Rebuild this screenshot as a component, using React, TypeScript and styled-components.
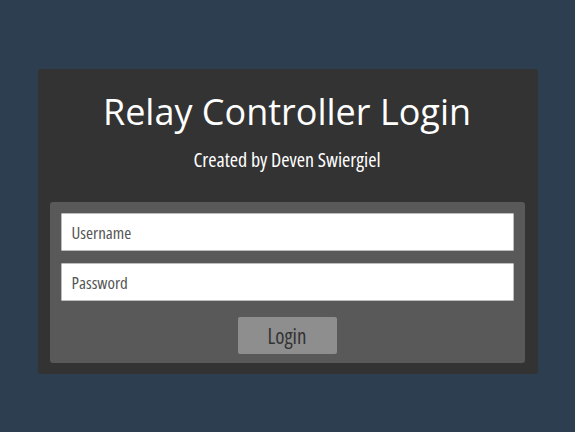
import React from "react";
import styled, { createGlobalStyle } from "styled-components";

const Global = createGlobalStyle`
  html, body { margin: 0; padding: 0; background: #2c3e50; }
  body { font-family: "Open Sans", "DejaVu Sans", sans-serif; }
`;

const Page = styled.div`
  display: flex;
  justify-content: center;
  align-items: flex-start;
  padding-top: 69px;
  min-height: 432px;
  box-sizing: border-box;
`;

const Card = styled.div`
  width: 500px;
  box-sizing: border-box;
  background: #333333;
  border-radius: 3px;
  padding: 21px 13px 11px 12px;
  display: flex;
  flex-direction: column;
  align-items: center;
`;

const Title = styled.h1`
  margin: 0;
  font-family: "Open Sans", sans-serif;
  font-weight: 400;
  font-size: 36px;
  line-height: 44px;
  color: #ffffff;
`;

const Subtitle = styled.h2`
  margin: 0;
  margin-top: 12px;
  font-family: "Open Sans", sans-serif;
  font-stretch: 75%;
  font-weight: 400;
  font-size: 20px;
  line-height: 28px;
  color: #ffffff;
`;

const Panel = styled.form`
  margin-top: 28px;
  align-self: stretch;
  background: #595959;
  border-radius: 3px;
  padding: 11px 11px 9px 11px;
  display: flex;
  flex-direction: column;
  align-items: center;
  gap: 12px;
`;

const Field = styled.input`
  align-self: stretch;
  box-sizing: border-box;
  height: 38px;
  border: 1px solid #bdbdbd;
  border-radius: 1px;
  background: #ffffff;
  padding: 0 10px;
  font-family: "Open Sans", sans-serif;
  font-stretch: 75%;
  font-size: 17px;
  color: #333;
  outline: none;
  &::placeholder { color: #555; }
`;

const Button = styled.button`
  margin-top: 4px;
  width: 99px;
  height: 37px;
  border: none;
  border-radius: 2px;
  background: #8e8e8e;
  color: #333333;
  font-family: "Open Sans", sans-serif;
  font-stretch: 75%;
  font-size: 21px;
  padding: 0;
  cursor: pointer;
`;

export default function App() {
  return (
    <>
      <Global />
      <Page>
        <Card>
          <Title>Relay Controller Login</Title>
          <Subtitle>Created by Deven Swiergiel</Subtitle>
          <Panel onSubmit={(e) => e.preventDefault()}>
            <Field type="text" placeholder="Username" />
            <Field type="password" placeholder="Password" />
            <Button type="submit">Login</Button>
          </Panel>
        </Card>
      </Page>
    </>
  );
}
